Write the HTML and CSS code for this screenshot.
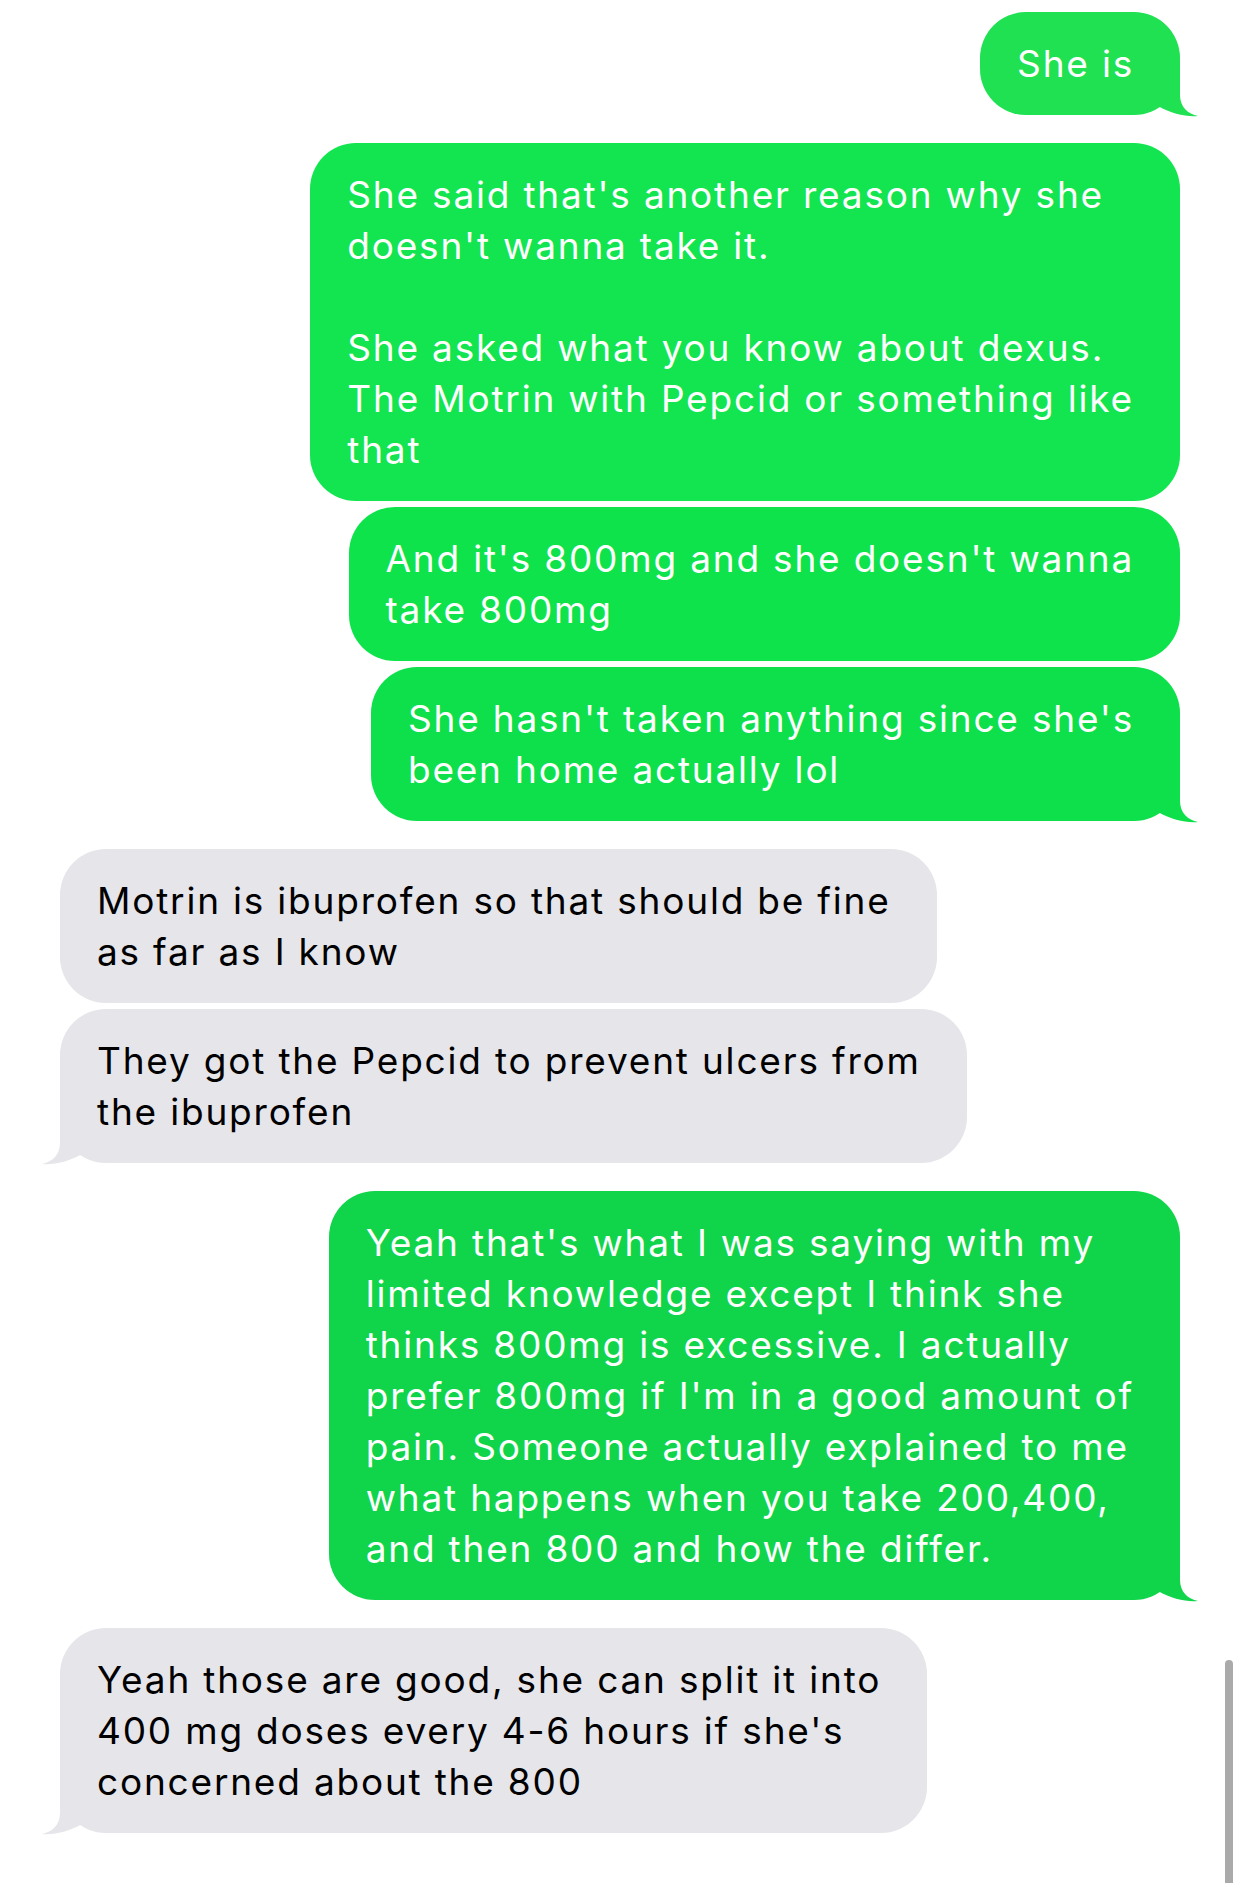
FILE: index.html
```html
<!DOCTYPE html>
<html>
<head>
<meta charset="utf-8">
<link rel="stylesheet" href="styles.css">
</head>
<body>
<div class="thread">
  <div class="bubble sent tone-1 has-tail group-end">
    She is
    <svg class="tail" viewBox="0 0 60 56" width="60" height="56"><path d="M10 4 L40 4 L40 34 C40 46 48 53 58 55 C46 56 32 53 18 45 L10 34 Z"/></svg>
  </div>
  <div class="bubble sent tone-2">
    She said that's another reason why she<br>doesn't wanna take it.<br><br>She asked what you know about dexus.<br>The Motrin with Pepcid or something like<br>that
  </div>
  <div class="bubble sent tone-3">
    And it's 800mg and she doesn't wanna<br>take 800mg
  </div>
  <div class="bubble sent tone-4 has-tail group-end">
    She hasn't taken anything since she's<br>been home actually lol
    <svg class="tail" viewBox="0 0 60 56" width="60" height="56"><path d="M10 4 L40 4 L40 34 C40 46 48 53 58 55 C46 56 32 53 18 45 L10 34 Z"/></svg>
  </div>
  <div class="bubble received">
    Motrin is ibuprofen so that should be fine<br>as far as I know
  </div>
  <div class="bubble received has-tail group-end">
    They got the Pepcid to prevent ulcers from<br>the ibuprofen
    <svg class="tail" viewBox="0 0 60 56" width="60" height="56"><path d="M10 4 L40 4 L40 34 C40 46 48 53 58 55 C46 56 32 53 18 45 L10 34 Z"/></svg>
  </div>
  <div class="bubble sent tone-5 has-tail group-end">
    Yeah that's what I was saying with my<br>limited knowledge except I think she<br>thinks 800mg is excessive. I actually<br>prefer 800mg if I'm in a good amount of<br>pain. Someone actually explained to me<br>what happens when you take 200,400,<br>and then 800 and how the differ.
    <svg class="tail" viewBox="0 0 60 56" width="60" height="56"><path d="M10 4 L40 4 L40 34 C40 46 48 53 58 55 C46 56 32 53 18 45 L10 34 Z"/></svg>
  </div>
  <div class="bubble received has-tail">
    Yeah those are good, she can split it into<br>400 mg doses every 4-6 hours if she's<br>concerned about the 800
    <svg class="tail" viewBox="0 0 60 56" width="60" height="56"><path d="M10 4 L40 4 L40 34 C40 46 48 53 58 55 C46 56 32 53 18 45 L10 34 Z"/></svg>
  </div>
</div>
<div class="scrollbar"></div>
</body>
</html>
```

FILE: styles.css
```css
html, body {
  margin: 0;
  padding: 0;
  background: #ffffff;
}

body {
  width: 1242px;
  height: 1883px;
  overflow: hidden;
  position: relative;
  font-family: Inter, "Liberation Sans", Arial, sans-serif;
}

.thread {
  display: flex;
  flex-direction: column;
  gap: 6px;
  padding: 12px 62px 0 60px;
}

.bubble {
  position: relative;
  padding: 26px 46px 26px 37px;
  border-radius: 46px;
  font-size: 37px;
  line-height: 51px;
  white-space: nowrap;
  letter-spacing: 1.8px;
}

.bubble.group-end {
  margin-bottom: 22px;
}

.sent {
  align-self: flex-end;
  color: #ffffff;
  background: var(--bubble);
}

.received {
  align-self: flex-start;
  color: #000000;
  background: #e5e5ea;
  --bubble: #e5e5ea;
}

.tone-1 { --bubble: #1fe152; }
.tone-2 { --bubble: #12e54f; }
.tone-3 { --bubble: #0fe34c; }
.tone-4 { --bubble: #0de04b; }
.tone-5 { --bubble: #10d44a; }

.tail {
  position: absolute;
  bottom: -2px;
  display: block;
}

.tail path {
  fill: var(--bubble);
}

.sent .tail {
  right: -20px;
}

.received .tail {
  left: -20px;
  transform: scaleX(-1);
}

.scrollbar {
  position: absolute;
  left: 1225px;
  top: 1660px;
  width: 8px;
  height: 240px;
  border-radius: 4px;
  background: #aaaaaa;
}
```
